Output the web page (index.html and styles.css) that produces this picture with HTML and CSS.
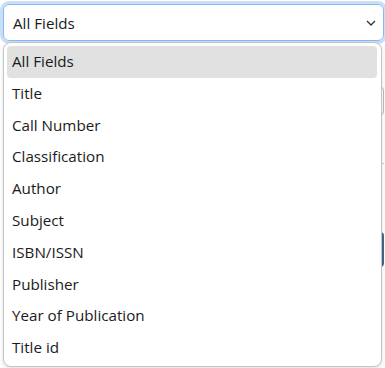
FILE: index.html
```html
<!DOCTYPE html>
<html lang="en">
<head>
    <meta charset="UTF-8">
    <meta name="viewport" content="width=device-width, initial-scale=1.0">
    <title>Search</title>
    <link rel="stylesheet" href="styles.css">
</head>
<body>
    <div class="search-form">
        <div class="field-select">
            <span>All Fields</span>
            <svg class="chevron" width="10" height="6" viewBox="0 0 10 6">
                <polyline points="1,1 5,5 9,1" fill="none" stroke="#333" stroke-width="1.3"/>
            </svg>
        </div>
        <div class="search-input"></div>
        <div class="divider"></div>
        <div class="search-btn"></div>

        <ul class="dropdown">
            <li class="selected">All Fields</li>
            <li>Title</li>
            <li>Call Number</li>
            <li>Classification</li>
            <li>Author</li>
            <li>Subject</li>
            <li>ISBN/ISSN</li>
            <li>Publisher</li>
            <li>Year of Publication</li>
            <li>Title id</li>
        </ul>
    </div>
</body>
</html>
```

FILE: styles.css
```css
html, body {
    min-height: 368px;
}
body {
    margin: 0;
    background: #fff;
    font-family: "Open Sans", "Noto Sans", sans-serif;
    font-size: 15.2px;
    color: #1b1b1b;
}
.search-form {
    position: relative;
    min-height: 368px;
    padding: 4px 1px 0 3px;
    box-sizing: border-box;
}
.field-select {
    height: 35px;
    border: 1px solid #86b7fe;
    border-radius: 6px;
    box-shadow: 0 0 0 3px rgba(160, 196, 235, 0.55);
    display: flex;
    align-items: center;
    justify-content: space-between;
    padding: 0 7px 0 9px;
}
.chevron {
    margin-top: 1px;
}
.search-input {
    margin-top: 44px;
    height: 30px;
    border: 1px solid #bbb;
    border-radius: 6px;
}
.divider {
    margin-top: 46px;
    border-top: 1px solid #ccc;
}
.search-btn {
    margin-top: 68px;
    height: 35px;
    background: #3d6a8f;
    border-radius: 4px;
}
.dropdown {
    position: absolute;
    top: 42px;
    left: 3px;
    width: 370px;
    margin: 0;
    padding: 3px 4px 2px 3px;
    list-style: none;
    background: #fff;
    border: 1px solid #c4c4c4;
    border-radius: 8px;
    box-shadow: 0 2px 4px rgba(0, 0, 0, 0.12);
}
.dropdown li {
    height: 31.8px;
    line-height: 31.8px;
    padding-left: 5px;
    border-radius: 4px;
}
.dropdown li.selected {
    background: #e1e1e1;
}
```
